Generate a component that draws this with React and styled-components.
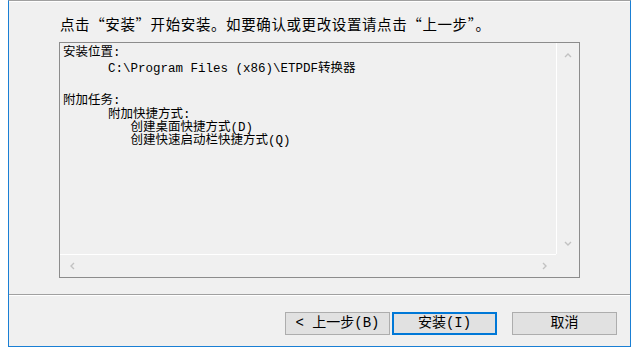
import React from 'react';
import styled, { createGlobalStyle } from 'styled-components';

const GlobalStyle = createGlobalStyle`
  html, body {
    margin: 0;
    padding: 0;
    background: #ffffff;
  }
  body {
    font-family: "Noto Sans CJK SC", sans-serif;
  }
`;

const Page = styled.div`
  width: 635px;
  height: 353px;
  padding-left: 8px;
  box-sizing: border-box;
  background: #ffffff;
`;

const Window = styled.div`
  width: 623px;
  height: 347px;
  box-sizing: border-box;
  background: #f0f0f0;
  border: 1px solid #1a7fd4;
  border-top: 1px solid #a0a0a0;
  display: flex;
  flex-direction: column;
`;

const Body = styled.div`
  flex: 1;
  padding: 12px 0 0 50px;
  border-top: 1px solid #ffffff;
  box-sizing: border-box;
`;

const Intro = styled.div`
  padding-left: 1px;
  font-family: "Noto Sans CJK SC", sans-serif;
  font-size: 14.5px;
  letter-spacing: 0.6px;
  line-height: 20px;
  height: 20px;
  color: #000;
  white-space: nowrap;
  margin-bottom: 8px;
`;

const Memo = styled.div`
  width: 521px;
  height: 236px;
  box-sizing: border-box;
  border: 1px solid #8c8c8c;
  display: grid;
  grid-template-columns: 1fr 23px;
  grid-template-rows: 1fr 23px;
  background: #f0f0f0;
`;

const MemoText = styled.div`
  padding: 2px 0 0 3px;
  font-family: "Liberation Mono", "Noto Sans CJK SC", monospace;
  font-size: 12.5px;
  color: #000;
  white-space: pre;
  overflow: hidden;
`;

const Line = styled.div`
  height: ${p => p.h}px;
  line-height: ${p => p.h}px;
`;

const VScroll = styled.div`
  border-left: 1px solid #ffffff;
  display: flex;
  flex-direction: column;
  justify-content: space-between;
  align-items: center;
  padding: 9px 0 6px;
`;

const HScroll = styled.div`
  border-top: 1px solid #ffffff;
  display: flex;
  justify-content: space-between;
  align-items: center;
  padding: 0 7px 0 9px;
`;

const Corner = styled.div`
  background: #f0f0f0;
`;

const Footer = styled.div`
  height: 52px;
  box-sizing: border-box;
  border-top: 1px solid #a0a0a0;
  box-shadow: inset 0 1px 0 #ffffff;
  display: flex;
  justify-content: flex-end;
  align-items: flex-start;
  padding: 17px 13px 0 0;
`;

const Button = styled.button`
  width: 105px;
  height: 23px;
  box-sizing: border-box;
  margin: 0 0 0 ${p => p.gap}px;
  padding: 0;
  background: #e1e1e1;
  border: ${p => (p.primary ? '2px solid #0078d7' : '1px solid #adadad')};
  font-family: "Liberation Mono", "Noto Sans CJK SC", monospace;
  font-size: 14px;
  line-height: 19px;
  color: #000;
  white-space: nowrap;
`;

const Chevron = ({ dir }) => {
  const paths = {
    up: 'M1 5 L4 2 L7 5',
    down: 'M1 2 L4 5 L7 2',
    left: 'M5 1 L2 4 L5 7',
    right: 'M2 1 L5 4 L2 7',
  };
  return (
    <svg width="8" height="8" viewBox="0 0 8 8">
      <path d={paths[dir]} fill="none" stroke="#c2c2c2" strokeWidth="1.4" />
    </svg>
  );
};

const lines = [
  { t: '安装位置:', h: 16 },
  { t: '      C:\\Program Files (x86)\\ETPDF转换器', h: 16 },
  { t: '', h: 16 },
  { t: '附加任务:', h: 16 },
  { t: '      附加快捷方式:', h: 13 },
  { t: '         创建桌面快捷方式(D)', h: 13 },
  { t: '         创建快速启动栏快捷方式(Q)', h: 13 },
];

export default function App() {
  return (
    <>
      <GlobalStyle />
      <Page>
        <Window>
          <Body>
            <Intro>点击“安装”开始安装。如要确认或更改设置请点击“上一步”。</Intro>
            <Memo>
              <MemoText>
                {lines.map((l, i) => (
                  <Line key={i} h={l.h}>{l.t}</Line>
                ))}
              </MemoText>
              <VScroll>
                <Chevron dir="up" />
                <Chevron dir="down" />
              </VScroll>
              <HScroll>
                <Chevron dir="left" />
                <Chevron dir="right" />
              </HScroll>
              <Corner />
            </Memo>
          </Body>
          <Footer>
            <Button gap={0}>&lt; 上一步(B)</Button>
            <Button gap={2} primary>安装(I)</Button>
            <Button gap={15}>取消</Button>
          </Footer>
        </Window>
      </Page>
    </>
  );
}
